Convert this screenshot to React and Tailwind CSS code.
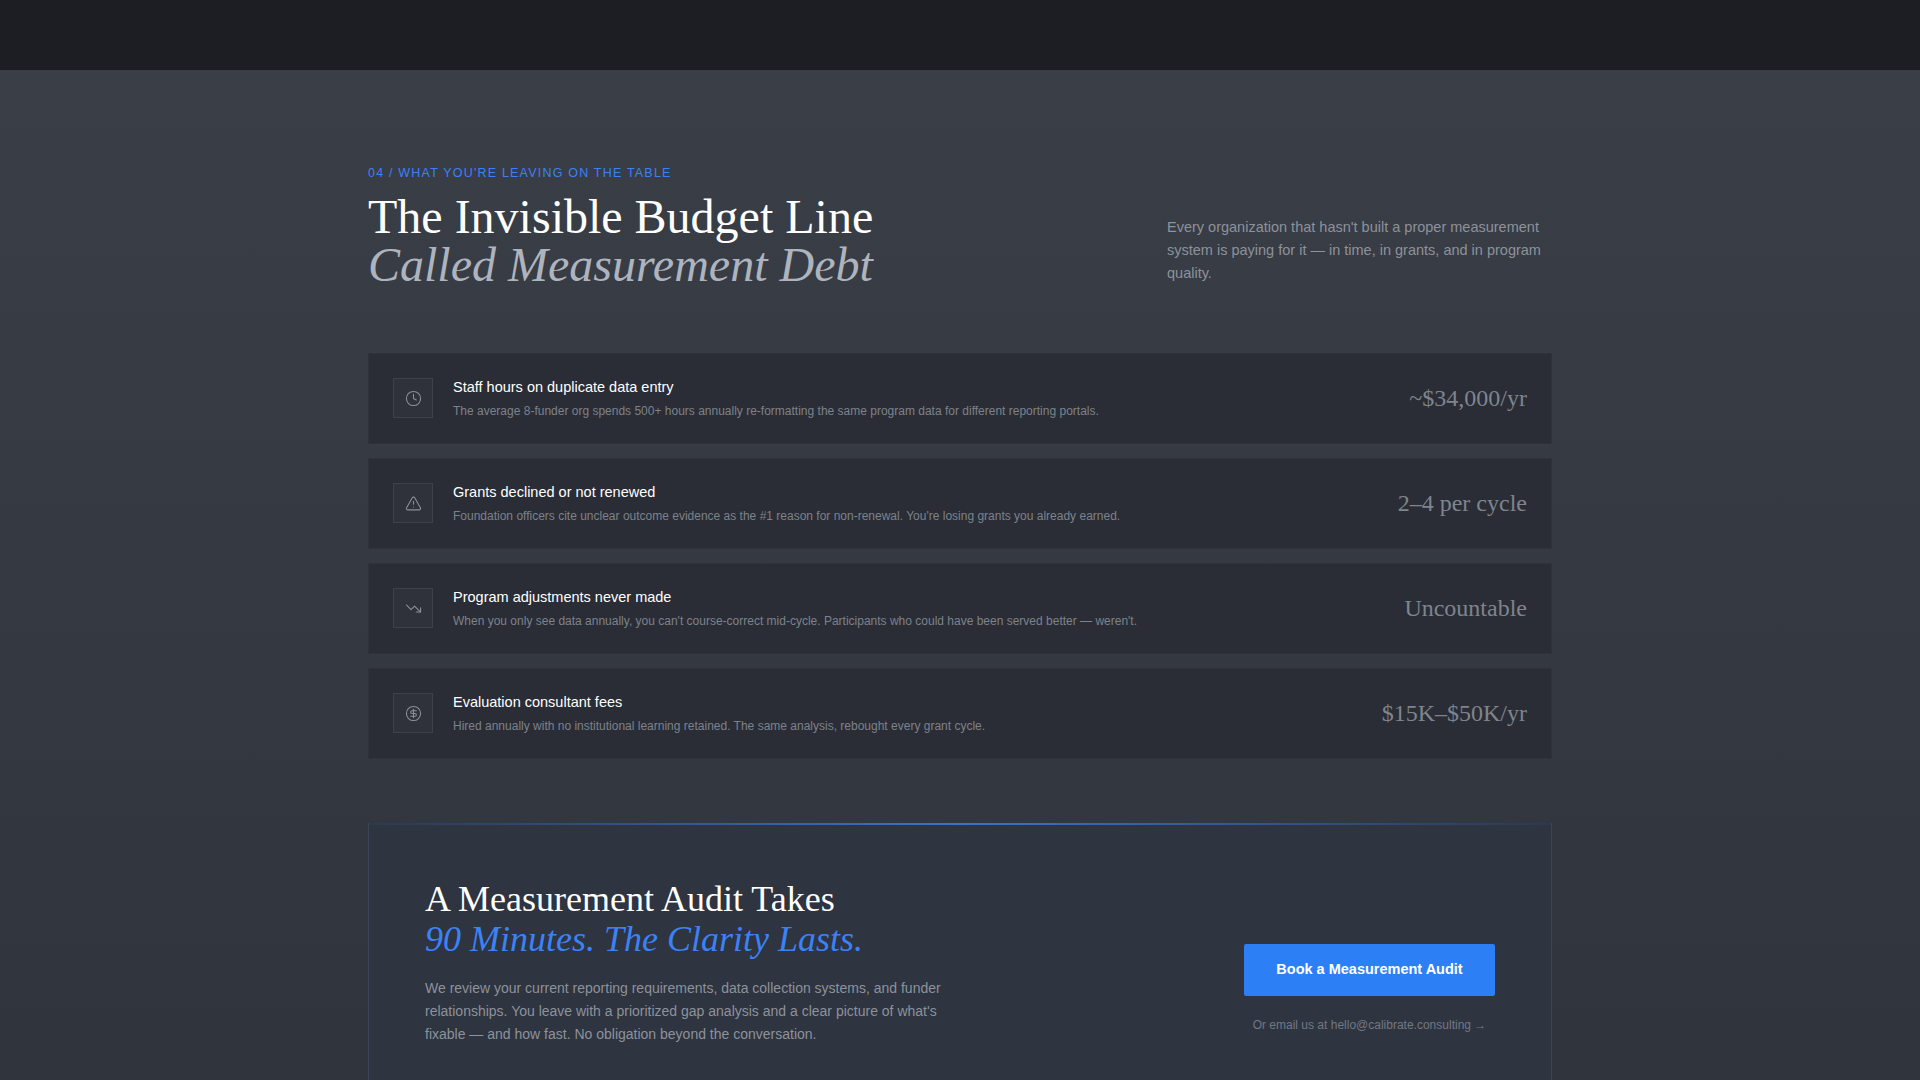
import React from "react";
import { Clock, TriangleAlert, TrendingDown, CircleDollarSign } from "lucide-react";

const rows = [
  { icon: Clock, t: "Staff hours on duplicate data entry", d: "The average 8-funder org spends 500+ hours annually re-formatting the same program data for different reporting portals.", v: "~$34,000/yr" },
  { icon: TriangleAlert, t: "Grants declined or not renewed", d: "Foundation officers cite unclear outcome evidence as the #1 reason for non-renewal. You're losing grants you already earned.", v: "2–4 per cycle" },
  { icon: TrendingDown, t: "Program adjustments never made", d: "When you only see data annually, you can't course-correct mid-cycle. Participants who could have been served better — weren't.", v: "Uncountable" },
  { icon: CircleDollarSign, t: "Evaluation consultant fees", d: "Hired annually with no institutional learning retained. The same analysis, rebought every grant cycle.", v: "$15K–$50K/yr" },
];

const serif = { fontFamily: '"Liberation Serif", serif' };

export default function App() {
  return (
    <div className="h-[1080px] overflow-hidden bg-[#33373f]" style={{ fontFamily: '"Liberation Sans", Arial, sans-serif' }}>
      <div className="h-[70px] bg-[#1d1e23]" />
      <div className="bg-gradient-to-b from-[#3a3e47] to-[#30343c] h-[1010px]">
        <div className="w-[1184px] mx-auto pt-[94px]">
          <div className="flex justify-between">
            <div>
              <div className="text-[12.5px] tracking-[1.2px] text-[#3b82f6] uppercase">04 / What you're leaving on the table</div>
              <h1 className="mt-[10px] text-[48px] leading-[48px] text-white" style={serif}>The Invisible Budget Line</h1>
              <h2 className="text-[48px] leading-[48px] italic text-[#aeb4bd]" style={serif}>Called Measurement Debt</h2>
            </div>
            <p className="w-[385px] mt-[52px] text-[14.5px] leading-[23px] text-[#8d929b]">Every organization that hasn't built a proper measurement system is paying for it — in time, in grants, and in program quality.</p>
          </div>
          <div className="mt-[64px] flex flex-col gap-[14px]">
            {rows.map((r) => (
              <div key={r.t} className="h-[91px] bg-[#2a2d35] flex items-center px-[24px] border border-[#2f323a]">
                <div className="w-[40px] h-[40px] border border-[#3d414a] bg-[#2f323a] flex items-center justify-center shrink-0">
                  <r.icon size={17} strokeWidth={1.5} className="text-[#8b9099]" />
                </div>
                <div className="ml-[20px] flex-1">
                  <div className="text-[14.5px] text-white">{r.t}</div>
                  <div className="mt-[3px] text-[12px] text-[#7d828b]">{r.d}</div>
                </div>
                <div className="text-[24px] text-[#7f848d]" style={serif}>{r.v}</div>
              </div>
            ))}
          </div>
          <div className="mt-[64px] relative border border-[#3b4556] bg-[#2e3440] h-[260px] px-[56px] pt-[55px] flex justify-between">
            <div className="absolute left-0 right-0 -top-px h-[2px] bg-gradient-to-r from-[#2a3a55] via-[#3b73c8] to-[#2a3a55]" />
            <div>
              <div className="text-[36px] leading-[40px] text-white" style={serif}>A Measurement Audit Takes</div>
              <div className="text-[36px] leading-[40px] italic text-[#3b82f6]" style={serif}>90 Minutes. The Clarity Lasts.</div>
              <p className="mt-[18px] w-[520px] text-[14px] leading-[23px] text-[#8d929b]">We review your current reporting requirements, data collection systems, and funder relationships. You leave with a prioritized gap analysis and a clear picture of what's fixable — and how fast. No obligation beyond the conversation.</p>
              <div className="mt-[30px] flex gap-[28px] text-[12px] tracking-[1.2px] text-[#5f6570] uppercase">
                <span>Audit Duration</span><span>Turnaround for Gap Report</span><span>Cost</span>
              </div>
            </div>
            <div className="flex flex-col items-center pt-[65px]">
              <button className="w-[251px] h-[52px] bg-[#2d7ff6] text-white font-bold text-[14.5px] rounded-[2px]">Book a Measurement Audit</button>
              <div className="mt-[20px] text-[12px] text-[#737883]">Or email us at hello@calibrate.consulting →</div>
            </div>
          </div>
        </div>
      </div>
    </div>
  );
}
